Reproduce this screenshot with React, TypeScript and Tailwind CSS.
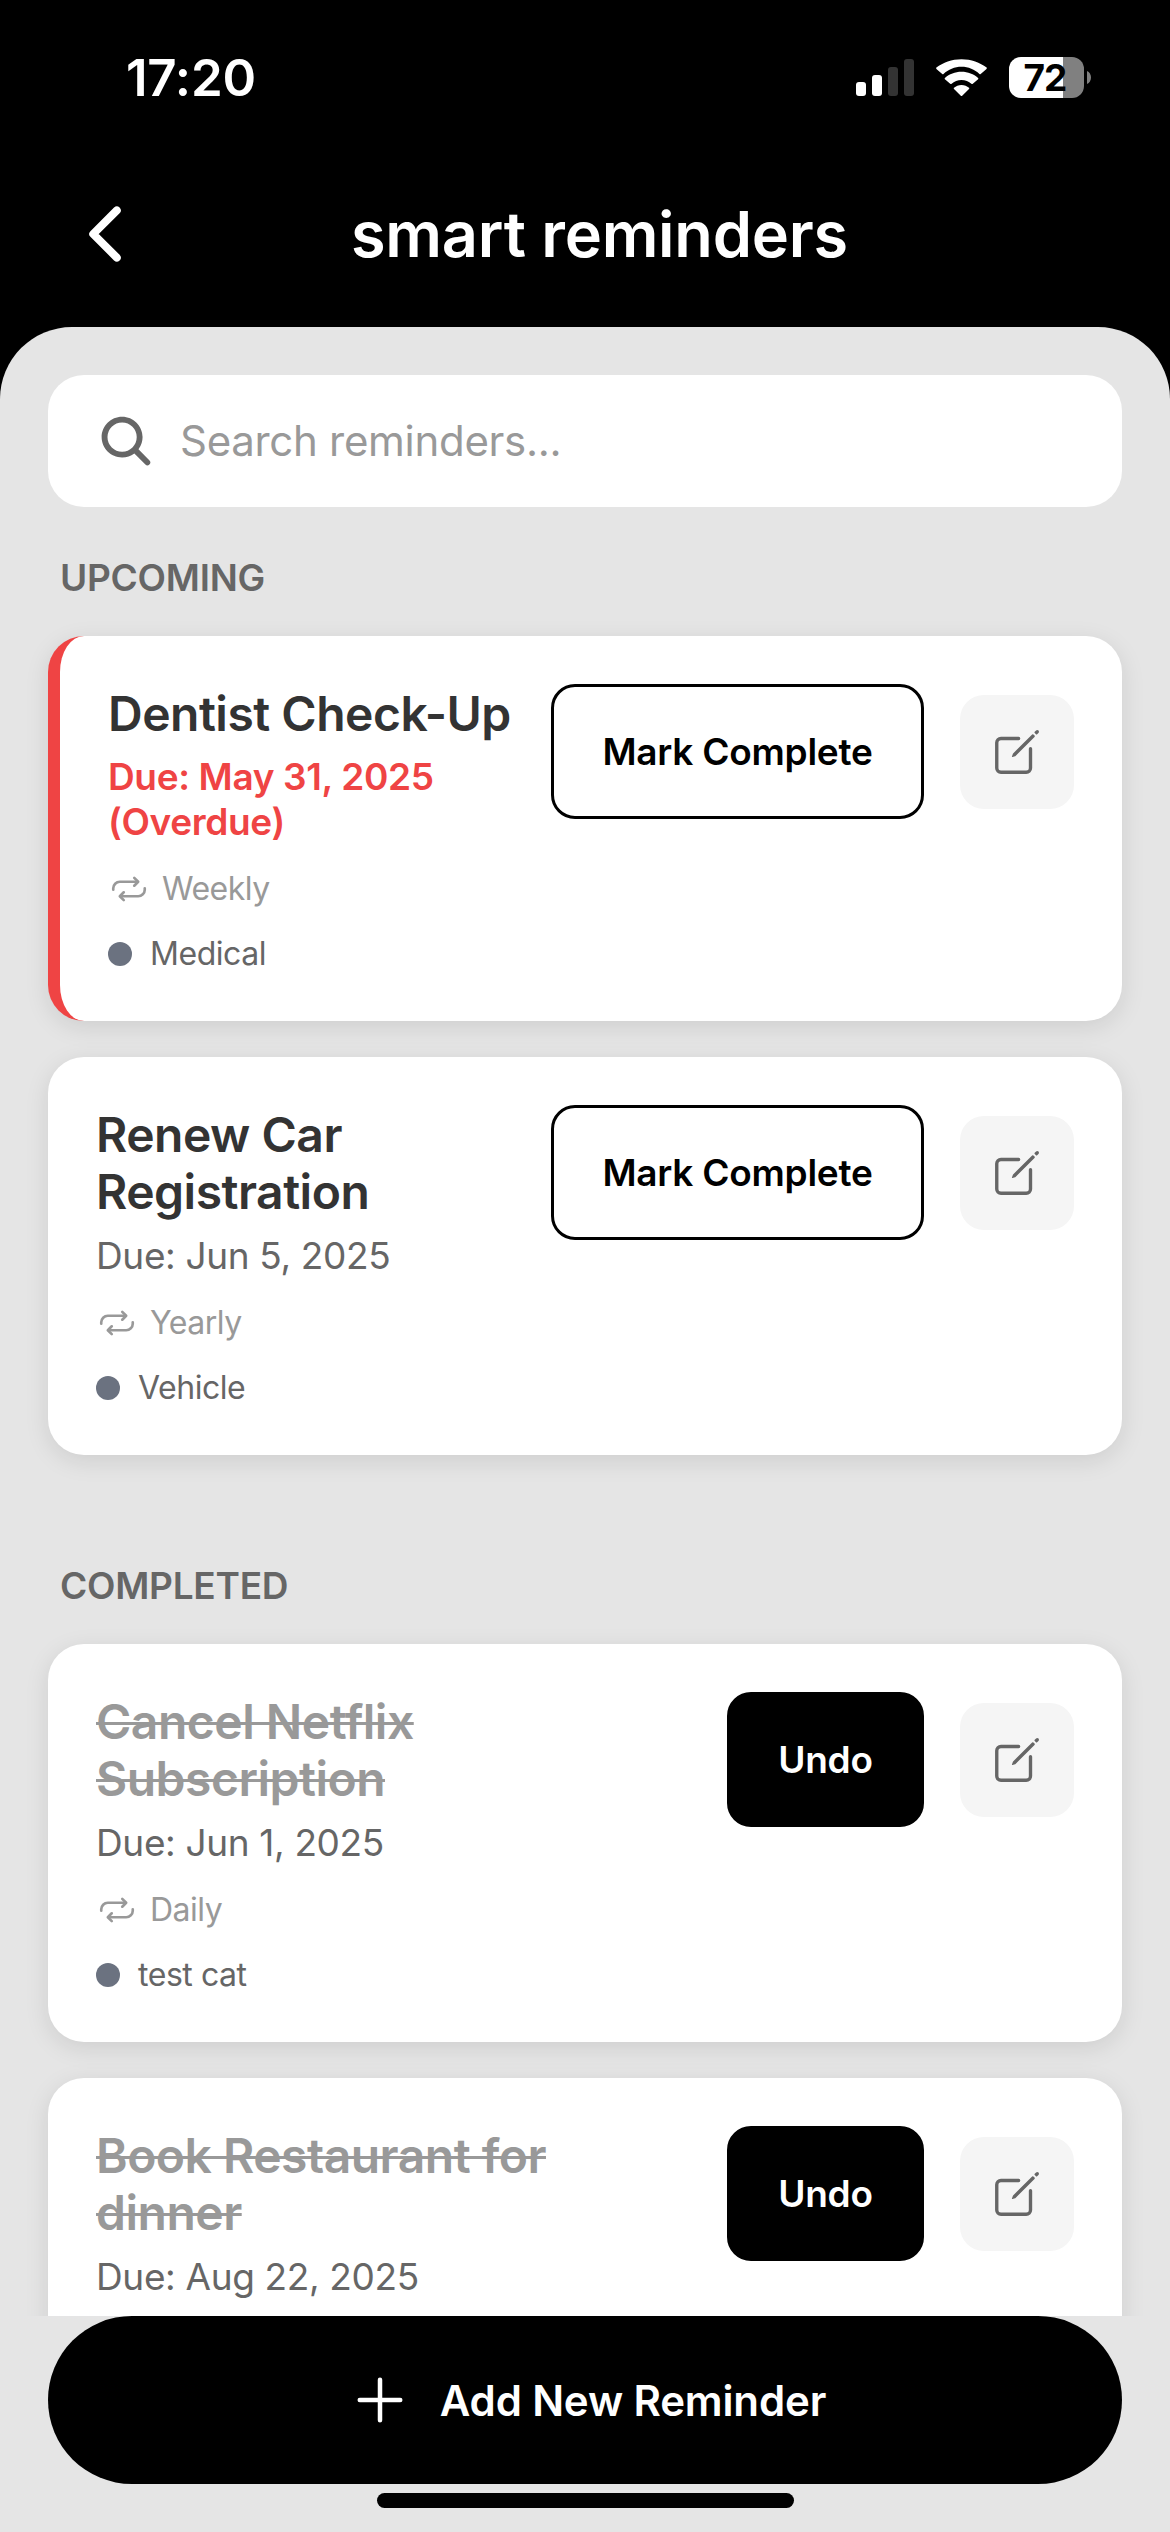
import { IoAdd, IoChevronBack, IoCreateOutline, IoRepeatOutline, IoSearch } from "react-icons/io5";

type Reminder = {
  title: string;
  due: string;
  repeat?: string;
  category?: string;
  overdue?: boolean;
  completed?: boolean;
};

const upcoming: Reminder[] = [
  { title: "Dentist Check-Up", due: "Due: May 31, 2025 (Overdue)", repeat: "Weekly", category: "Medical", overdue: true },
  { title: "Renew Car Registration", due: "Due: Jun 5, 2025", repeat: "Yearly", category: "Vehicle" },
];

const completed: Reminder[] = [
  { title: "Cancel Netflix Subscription", due: "Due: Jun 1, 2025", repeat: "Daily", category: "test cat", completed: true },
  { title: "Book Restaurant for dinner", due: "Due: Aug 22, 2025", completed: true },
];

function StatusBar() {
  return (
    <div className="flex h-[156px] shrink-0 items-start justify-between pt-[57px] pr-[79px] pl-[126px]">
      <span className="text-[51px] leading-[42px] font-semibold tracking-[-0.2px] text-white">17:20</span>
      <div className="flex items-center">
        <svg width="58" height="37" viewBox="0 0 58 37" className="mr-[22px]">
          <rect x="0" y="23" width="10" height="14" rx="3" fill="#fff" />
          <rect x="16" y="16" width="10" height="21" rx="3" fill="#fff" />
          <rect x="32" y="8" width="10" height="29" rx="3" fill="#333" />
          <rect x="48" y="0" width="10" height="37" rx="3" fill="#333" />
        </svg>
        <svg width="51" height="37" viewBox="0 0 51 37" className="mr-[22px]" fill="#fff">
          <path d="M25.500 7.600c6.900 0 13.200 2.700 17.900 7.100.4.300.9.300 1.300 0l5.800-5c.4-.4.500-1 .1-1.300C44 3.200 35.100 0 25.500 0S7 3.200.400 8.400c-.4.300-.4.900 0 1.300l5.800 5c.4.300.9.300 1.300 0 4.800-4.400 11.100-7.100 18-7.100z" transform="translate(0 .2)" />
          <path d="M25.500 20.300c3.800 0 7.300 1.400 9.900 3.800.4.400 1 .4 1.400 0l5.300-4.500c.4-.4.400-1 0-1.400-4.400-3.900-10.200-6.200-16.600-6.200s-12.200 2.300-16.600 6.200c-.4.400-.4 1 0 1.400l5.300 4.500c.4.400 1 .4 1.400 0 2.600-2.400 6.100-3.800 9.900-3.800z" transform="translate(0 .7)" />
          <path d="M33 28.800c.4.300.4.800 0 1.100l-6.800 6.800c-.4.400-1 .4-1.400 0L18 29.900c-.4-.3-.4-.8 0-1.100 2-1.800 4.600-2.900 7.500-2.900s5.500 1.100 7.500 2.900z" />
        </svg>
        <div className="flex h-[41px] w-[75px] items-center justify-center rounded-[12px] bg-[linear-gradient(90deg,#fff_54px,#808080_54px)]">
          <span className="pr-[3px] text-[37px] leading-[41px] font-bold tracking-[-1px] text-black">72</span>
        </div>
        <svg width="4" height="13" viewBox="0 0 4 13" className="ml-[3px]" fill="#808080">
          <path d="M0 0c2.500 1.200 4 3.600 4 6.500S2.500 11.800 0 13z" />
        </svg>
      </div>
    </div>
  );
}

function ReminderCard({ item }: { item: Reminder }) {
  return (
    <article
      className={`flex min-h-[385px] shrink-0 items-start gap-6 rounded-[36px] bg-white p-12 shadow-[0_6px_24px_rgba(0,0,0,0.1)] ${
        item.overdue ? "border-l-[12px] border-[#ef4444]" : ""
      }`}
    >
      <div className="min-w-0 flex-1">
        <h3
          className={`pt-px text-[48px] leading-[57px] font-semibold tracking-[-0.5px] ${
            item.completed ? "text-[#999] line-through decoration-[3px]" : "text-[#333]"
          }`}
        >
          {item.title}
        </h3>
        <p
          className={`text-[37px] leading-[45px] tracking-[-0.35px] ${
            item.overdue ? "mt-3 font-semibold text-[#ef4444]" : "mt-[13px] text-[#666]"
          }`}
        >
          {item.due}
        </p>
        {item.repeat && (
          <div className="mt-6 flex h-[42px] items-center gap-3 text-[32px] tracking-[-0.5px] text-[#999]">
            <IoRepeatOutline size={42} />
            <span>{item.repeat}</span>
          </div>
        )}
        {item.category && (
          <div className="mt-6 flex h-[39px] items-center gap-[18px] text-[32px] tracking-[-0.45px] text-[#666]">
            <span className="size-6 rounded-full bg-[#6b7280]" />
            <span>{item.category}</span>
          </div>
        )}
      </div>
      <div className="flex items-center gap-9">
        <button
          className={`h-[135px] rounded-[24px] border-[3px] border-black text-[37px] font-semibold tracking-[-0.25px] whitespace-nowrap ${
            item.completed ? "w-[197px] bg-black text-white" : "w-[373px] bg-white text-black"
          }`}
        >
          {item.completed ? "Undo" : "Mark Complete"}
        </button>
        <button className="flex size-[114px] items-center justify-center rounded-[24px] bg-[#f5f5f5] text-[#666]">
          <IoCreateOutline size={54} />
        </button>
      </div>
    </article>
  );
}

export default function App() {
  return (
    <div className="flex h-[2532px] w-[1170px] flex-col overflow-hidden bg-black font-['Inter',sans-serif]">
      <StatusBar />
      <header className="flex h-[171px] shrink-0 items-start pl-[63px]">
        <button className="mt-9 text-white">
          <IoChevronBack size={84} />
        </button>
        <h1 className="mt-[39px] ml-[204px] text-[63px] leading-[78px] font-semibold tracking-[-0.25px] whitespace-nowrap text-white">
          smart reminders
        </h1>
      </header>
      <main className="flex min-h-0 flex-1 flex-col rounded-t-[72px] bg-[#e5e5e5]">
        <div className="flex min-h-0 flex-1 flex-col overflow-hidden px-12 pt-12">
          <div className="flex h-[132px] shrink-0 items-center gap-6 rounded-[36px] bg-white px-12">
            <IoSearch size={60} className="text-[#666]" />
            <span className="pb-0.5 text-[42px] tracking-[-0.3px] text-[#999]">Search reminders...</span>
          </div>
          <h2 className="mt-12 ml-3 h-[45px] shrink-0 text-[37px] leading-[45px] font-semibold tracking-[-0.25px] text-[#666]">
            UPCOMING
          </h2>
          <section className="mt-9 flex shrink-0 flex-col gap-9">
            {upcoming.map((item) => (
              <ReminderCard key={item.title} item={item} />
            ))}
          </section>
          <h2 className="mt-[108px] ml-3 h-[45px] shrink-0 text-[37px] leading-[45px] font-semibold tracking-[-0.25px] text-[#666]">
            COMPLETED
          </h2>
          <section className="mt-9 flex shrink-0 flex-col gap-9">
            {completed.map((item) => (
              <ReminderCard key={item.title} item={item} />
            ))}
          </section>
        </div>
        <footer className="flex h-[216px] shrink-0 flex-col items-center px-12">
          <button className="flex h-[168px] w-full items-center justify-center gap-6 rounded-full bg-black text-[42px] font-semibold tracking-[-0.15px] text-white">
            <IoAdd size={72} />
            Add New Reminder
          </button>
          <div className="mt-[9px] h-[15px] w-[417px] rounded-full bg-black" />
        </footer>
      </main>
    </div>
  );
}
